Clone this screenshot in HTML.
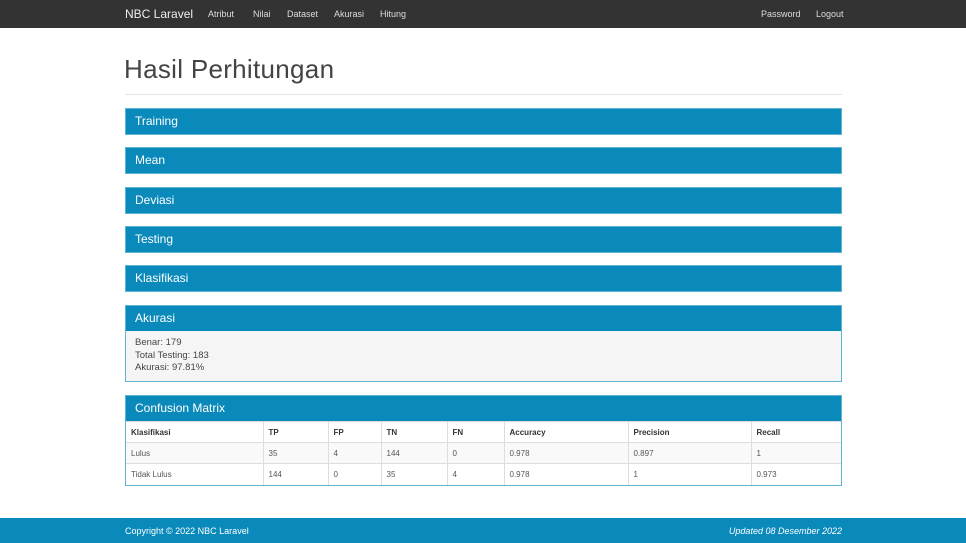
<!DOCTYPE html><html><head><style>
*{box-sizing:border-box;margin:0;padding:0}
body{width:966px;height:543px;overflow:hidden;background:#fff;font-family:"Liberation Sans",sans-serif;color:#333;position:relative}
.nav{height:28px;background:#333;position:relative;font-size:9px;color:#ddd}
.nav span{position:absolute;top:9px}
.brand{font-size:12px!important;top:7px!important;color:#eee}
h1{position:absolute;left:124px;top:54px;font-weight:normal;font-size:26px;color:#444;letter-spacing:0.3px}
.hr{position:absolute;left:125px;top:94px;width:717px;height:1px;background:#e5e5e5}
.p{position:absolute;left:125px;width:717px;border:1px solid #5fb3d3}
.p .h{background:#0a89bb;color:#fff;height:25px;line-height:25px;padding-left:9px;font-size:12px}
.b{background:#f5f5f5;padding:6px 9px;font-size:9.5px;line-height:12.5px;height:50px;color:#444}
table{border-collapse:collapse;width:100%;font-size:8px;background:#fff;color:#555}
th{color:#333}
td,th{height:21px;padding:0 5px;text-align:left;border-right:1px solid #ddd;border-top:1px solid #ddd}
td:last-child,th:last-child{border-right:none}
tr:nth-child(2) td{background:#f9f9f9}
.f{position:absolute;left:0;top:518px;width:966px;height:25px;background:#0a89bb;color:#fff;font-size:9px}
</style></head><body>
<div class="nav"><span class="brand" style="left:125px">NBC Laravel</span><span style="left:208px">Atribut</span><span style="left:253px">Nilai</span><span style="left:287px">Dataset</span><span style="left:334px">Akurasi</span><span style="left:380px">Hitung</span><span style="left:761px">Password</span><span style="left:816px">Logout</span></div>
<h1>Hasil Perhitungan</h1><div class="hr"></div>
<div class="p" style="top:108px"><div class="h">Training</div></div>
<div class="p" style="top:147px"><div class="h">Mean</div></div>
<div class="p" style="top:187px"><div class="h">Deviasi</div></div>
<div class="p" style="top:226px"><div class="h">Testing</div></div>
<div class="p" style="top:265px"><div class="h">Klasifikasi</div></div>
<div class="p" style="top:305px"><div class="h">Akurasi</div><div class="b">Benar: 179<br>Total Testing: 183<br>Akurasi: 97.81%</div></div>
<div class="p" style="top:395px"><div class="h">Confusion Matrix</div>
<table><tr><th style="width:137px">Klasifikasi</th><th style="width:65px">TP</th><th style="width:53px">FP</th><th style="width:66px">TN</th><th style="width:57px">FN</th><th style="width:124px">Accuracy</th><th style="width:123px">Precision</th><th>Recall</th></tr>
<tr><td>Lulus</td><td>35</td><td>4</td><td>144</td><td>0</td><td>0.978</td><td>0.897</td><td>1</td></tr>
<tr><td>Tidak Lulus</td><td>144</td><td>0</td><td>35</td><td>4</td><td>0.978</td><td>1</td><td>0.973</td></tr></table></div>
<div class="f"><span style="position:absolute;left:125px;top:8px">Copyright © 2022 NBC Laravel</span><span style="position:absolute;right:124px;top:8px;font-style:italic">Updated 08 Desember 2022</span></div>
</body></html>
